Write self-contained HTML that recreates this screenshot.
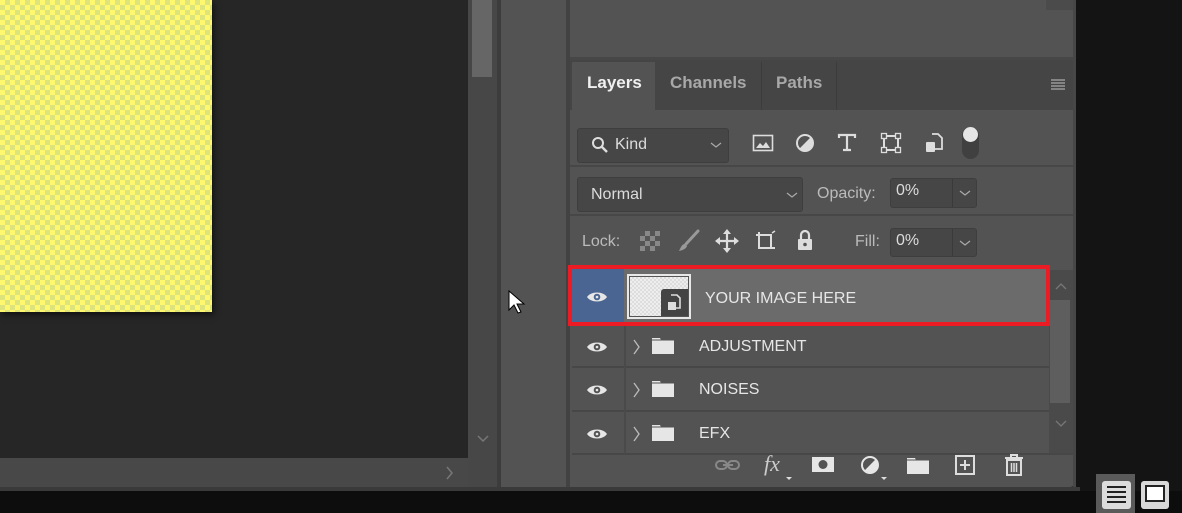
<!DOCTYPE html>
<html><head><meta charset="utf-8"><style>
*{margin:0;padding:0;box-sizing:border-box}
body{width:1182px;height:513px;overflow:hidden;background:#141414;position:relative;font-family:"Liberation Sans",sans-serif;color:#dcdcdc}
.a{position:absolute}
.chk{background-color:#fff86f;background-image:linear-gradient(45deg,#dde47c 25%,transparent 25%,transparent 75%,#dde47c 75%),linear-gradient(45deg,#dde47c 25%,transparent 25%,transparent 75%,#dde47c 75%);background-size:10px 10px;background-position:0 0,5px 5px}
.dd{background:#464646;border:1px solid #3e3e3e;border-radius:3px}
.t{font-size:16px;white-space:nowrap}
.ln{height:2px;background:#474747}
</style></head><body>
<!-- canvas -->
<div class="a" style="left:0;top:0;width:468px;height:458px;background:#262626"></div>
<div class="a chk" style="left:0;top:0;width:212px;height:312px;box-shadow:2px 3px 6px rgba(0,0,0,.5)"></div>
<!-- v scrollbar -->
<div class="a" style="left:468px;top:0;width:29px;height:487px;background:#474747"></div>
<div class="a" style="left:472px;top:0;width:20px;height:77px;background:#666"></div>
<svg class="a" style="left:476px;top:434px" width="14" height="10"><path d="M2 2l5 5 5-5" stroke="#777" stroke-width="1.5" fill="none"/></svg>
<!-- h scrollbar -->
<div class="a" style="left:0;top:458px;width:468px;height:29px;background:#484848"></div>
<svg class="a" style="left:445px;top:465px" width="10" height="16"><path d="M2 2l5 6-5 6" stroke="#777" stroke-width="1.5" fill="none"/></svg>
<div class="a" style="left:0;top:487px;width:1080px;height:4px;background:#3a3a3a"></div>
<div class="a" style="left:0;top:491px;width:1182px;height:22px;background:#0d0d0d"></div>
<!-- separator + middle panel -->
<div class="a" style="left:497px;top:0;width:4px;height:487px;background:#3c3c3c"></div>
<div class="a" style="left:501px;top:0;width:67px;height:487px;background:#535353"></div>
<div class="a" style="left:566px;top:0;width:4px;height:487px;background:#424242"></div>
<svg class="a" style="left:507px;top:289px" width="20" height="30"><path d="M2 2v19l5-5 4 8 3-1-4-8h7z" fill="#fff" stroke="#000" stroke-width="1"/></svg>
<!-- right panel -->
<div class="a" style="left:570px;top:0;width:506px;height:487px;background:#535353;border-bottom-right-radius:6px"></div>
<div class="a" style="left:1046px;top:0;width:28px;height:10px;background:#4b4b4b"></div>
<div class="a" style="left:570px;top:57px;width:506px;height:3px;background:#474747"></div>
<div class="a" style="left:1073px;top:0;width:3px;height:487px;background:#474747"></div>
<!-- tabs -->
<div class="a" style="left:570px;top:60px;width:503px;height:50px;background:#454545"></div>
<div class="a" style="left:572px;top:62px;width:83px;height:48px;background:#535353"></div>
<div class="a" style="left:761px;top:62px;width:1px;height:48px;background:#3c3c3c"></div>
<div class="a" style="left:836px;top:62px;width:1px;height:48px;background:#3c3c3c"></div>
<div class="a t" style="left:587px;top:73px;font-weight:bold;color:#f0f0f0;font-size:17px">Layers</div>
<div class="a t" style="left:670px;top:73px;font-weight:bold;color:#a8a8a8;font-size:17px">Channels</div>
<div class="a t" style="left:776px;top:73px;font-weight:bold;color:#a8a8a8;font-size:17px">Paths</div>
<svg class="a" style="left:1051px;top:79px" width="14" height="11"><path d="M0 1h14M0 4h14M0 7h14M0 10h14" stroke="#aaa" stroke-width="1.3"/></svg>
<!-- filter row -->
<div class="a dd" style="left:577px;top:128px;width:152px;height:35px"></div>
<svg class="a" style="left:591px;top:136px" width="18" height="18"><circle cx="7" cy="7" r="5" stroke="#ddd" stroke-width="2" fill="none"/><path d="M11 11l5 5" stroke="#ddd" stroke-width="2.4"/></svg>
<div class="a t" style="left:615px;top:136px">Kind</div>
<svg class="a" style="left:710px;top:141px" width="12" height="8"><path d="M1 2l5 4 5-4" stroke="#aaa" stroke-width="1.2" fill="none"/></svg>
<svg class="a" style="left:752px;top:133px" width="22" height="20"><rect x="1.5" y="2.5" width="19" height="15" stroke="#ddd" stroke-width="1.6" fill="none"/><path d="M4 15l4-5 3 3 3-4 4 6z" fill="#ddd"/></svg>
<svg class="a" style="left:795px;top:133px" width="20" height="20"><circle cx="10" cy="10" r="8" stroke="#ddd" stroke-width="2" fill="none"/><path d="M15.7 4.3A8 8 0 0 1 4.3 15.7z" fill="#ddd"/></svg>
<svg class="a" style="left:837px;top:132px" width="20" height="20"><path d="M2 6V3h16v3M10 3v15M6 18h8" stroke="#ddd" stroke-width="2.2" fill="none"/></svg>
<svg class="a" style="left:880px;top:132px" width="22" height="22"><rect x="4" y="4" width="14" height="14" stroke="#ddd" stroke-width="2" fill="none"/><g fill="#535353" stroke="#ddd" stroke-width="1.3"><rect x="1.5" y="1.5" width="5" height="5"/><rect x="15.5" y="1.5" width="5" height="5"/><rect x="1.5" y="15.5" width="5" height="5"/><rect x="15.5" y="15.5" width="5" height="5"/></g></svg>
<svg class="a" style="left:924px;top:132px" width="20" height="22"><path d="M8 2h6l4 4v11h-8" stroke="#ddd" stroke-width="1.8" fill="none"/><rect x="2" y="10" width="9" height="10" rx="1" fill="#ddd"/></svg>
<div class="a" style="left:962px;top:127px;width:17px;height:32px;border-radius:9px;background:#404040"></div>
<div class="a" style="left:963px;top:127px;width:15px;height:15px;border-radius:50%;background:#e6e6e6"></div>
<div class="a ln" style="left:570px;top:165px;width:503px"></div>
<!-- blend row -->
<div class="a dd" style="left:577px;top:177px;width:226px;height:35px"></div>
<div class="a t" style="left:591px;top:186px">Normal</div>
<svg class="a" style="left:786px;top:191px" width="12" height="8"><path d="M1 2l5 4 5-4" stroke="#aaa" stroke-width="1.2" fill="none"/></svg>
<div class="a t" style="left:817px;top:185px;color:#bbb">Opacity:</div>
<div class="a dd" style="left:890px;top:178px;width:87px;height:30px"></div>
<div class="a" style="left:952px;top:179px;width:1px;height:28px;background:#3a3a3a"></div>
<div class="a t" style="left:896px;top:182px">0%</div>
<svg class="a" style="left:959px;top:189px" width="12" height="8"><path d="M1 2l5 4 5-4" stroke="#aaa" stroke-width="1.2" fill="none"/></svg>
<div class="a ln" style="left:570px;top:214px;width:503px"></div>
<!-- lock row -->
<div class="a t" style="left:582px;top:233px;color:#bbb">Lock:</div>
<svg class="a" style="left:640px;top:231px" width="20" height="20"><rect x="0" y="0" width="20" height="20" fill="#888"/><g fill="#555"><rect x="0" y="0" width="5" height="5"/><rect x="10" y="0" width="5" height="5"/><rect x="5" y="5" width="5" height="5"/><rect x="15" y="5" width="5" height="5"/><rect x="0" y="10" width="5" height="5"/><rect x="10" y="10" width="5" height="5"/><rect x="5" y="15" width="5" height="5"/><rect x="15" y="15" width="5" height="5"/></g></svg>
<svg class="a" style="left:677px;top:229px" width="24" height="24"><path d="M21 2L9 15" stroke="#999" stroke-width="3" stroke-linecap="round"/><path d="M8 15c-3 0-4 3-6 7 4-1 7-2 8-5z" fill="#999"/></svg>
<svg class="a" style="left:715px;top:229px" width="24" height="24"><path d="M12 2v20M2 12h20" stroke="#ddd" stroke-width="2.2"/><path d="M12 0l4 5H8zM12 24l4-5H8zM0 12l5-4v8zM24 12l-5-4v8z" fill="#ddd"/></svg>
<svg class="a" style="left:753px;top:230px" width="24" height="22"><path d="M3 5h15v13M6 2v16h16" stroke="#ddd" stroke-width="2" fill="none"/><path d="M19 3l3-2" stroke="#ddd" stroke-width="1.5"/></svg>
<svg class="a" style="left:796px;top:229px" width="18" height="22"><path d="M5 10V6a4 4 0 0 1 8 0v4" stroke="#ddd" stroke-width="2.2" fill="none"/><rect x="2" y="10" width="14" height="11" rx="1" fill="#ddd"/><circle cx="9" cy="15.5" r="1.8" fill="#535353"/></svg>
<div class="a t" style="left:855px;top:233px;color:#bbb">Fill:</div>
<div class="a dd" style="left:890px;top:228px;width:87px;height:29px"></div>
<div class="a" style="left:952px;top:229px;width:1px;height:27px;background:#3a3a3a"></div>
<div class="a t" style="left:896px;top:232px">0%</div>
<svg class="a" style="left:959px;top:239px" width="12" height="8"><path d="M1 2l5 4 5-4" stroke="#aaa" stroke-width="1.2" fill="none"/></svg>
<!-- layer list scroll -->
<div class="a" style="left:1049px;top:270px;width:24px;height:185px;background:#4a4a4a"></div>
<div class="a" style="left:1050px;top:300px;width:20px;height:103px;background:#5e5e5e"></div>
<svg class="a" style="left:1054px;top:282px" width="14" height="9"><path d="M2 7l5-5 5 5" stroke="#777" stroke-width="1.3" fill="none"/></svg>
<svg class="a" style="left:1054px;top:419px" width="14" height="9"><path d="M2 2l5 5 5-5" stroke="#777" stroke-width="1.3" fill="none"/></svg>
<!-- selected row -->
<div class="a" style="left:572px;top:269px;width:52px;height:53px;background:#4b6592"></div>
<div class="a" style="left:624px;top:269px;width:423px;height:53px;background:#6b6b6b"></div>
<div class="a" style="left:568px;top:265px;width:482px;height:61px;border:4px solid #ed1c24"></div>
<div class="a" style="left:627px;top:274px;width:64px;height:45px;border:2px solid #e8e8e8;background:#555"></div>
<div class="a chk" style="left:630px;top:277px;width:58px;height:39px;background-color:#eee;background-image:linear-gradient(45deg,#ddd 25%,transparent 25%,transparent 75%,#ddd 75%),linear-gradient(45deg,#ddd 25%,transparent 25%,transparent 75%,#ddd 75%);background-size:4px 4px;background-position:0 0,2px 2px"></div>
<div class="a" style="left:661px;top:289px;width:27px;height:27px;background:#444;border-top-left-radius:3px"></div>
<svg class="a" style="left:664px;top:292px" width="22" height="22"><path d="M7 3h6l3 3v10h-6" stroke="#ddd" stroke-width="1.6" fill="none"/><rect x="4" y="10" width="8" height="8" fill="#ddd"/></svg>
<div class="a t" style="left:705px;top:290px;color:#e6e6e6">YOUR IMAGE HERE</div>
<!-- rows -->
<div class="a ln" style="left:572px;top:366px;width:477px"></div>
<div class="a ln" style="left:572px;top:410px;width:477px"></div>
<div class="a ln" style="left:572px;top:453px;width:501px"></div>
<div class="a" style="left:624px;top:326px;width:2px;height:128px;background:#4a4a4a"></div>
<svg width="0" height="0" style="position:absolute"><defs>
<g id="eye"><path d="M1 8C5 2 17 2 21 8C17 14 5 14 1 8z" fill="#e6e6e6"/><circle cx="11" cy="8" r="3.3" fill="#535353"/><circle cx="11" cy="8" r="1.3" fill="#e6e6e6"/></g>
<g id="fold"><path d="M1 3h8l1 2h13v14H1z" fill="#e6e6e6"/><path d="M1 5h22" stroke="#535353" stroke-width="1"/></g>
</defs></svg>
<svg class="a" style="left:586px;top:289px" width="22" height="16"><path d="M1 8C5 2 17 2 21 8C17 14 5 14 1 8z" fill="#e6e6e6"/><circle cx="11" cy="8" r="3.3" fill="#4b6592"/><circle cx="11" cy="8" r="1.3" fill="#e6e6e6"/></svg>
<svg class="a" style="left:586px;top:339px" width="22" height="16"><use href="#eye"/></svg>
<svg class="a" style="left:586px;top:382px" width="22" height="16"><use href="#eye"/></svg>
<svg class="a" style="left:586px;top:426px" width="22" height="16"><use href="#eye"/></svg>
<svg class="a" style="left:633px;top:338px" width="8" height="18"><path d="M1 2l5 7-5 7" stroke="#bbb" stroke-width="1.3" fill="none"/></svg>
<svg class="a" style="left:633px;top:381px" width="8" height="18"><path d="M1 2l5 7-5 7" stroke="#bbb" stroke-width="1.3" fill="none"/></svg>
<svg class="a" style="left:633px;top:425px" width="8" height="18"><path d="M1 2l5 7-5 7" stroke="#bbb" stroke-width="1.3" fill="none"/></svg>
<svg class="a" style="left:651px;top:335px" width="26" height="22"><use href="#fold"/></svg>
<svg class="a" style="left:651px;top:378px" width="26" height="22"><use href="#fold"/></svg>
<svg class="a" style="left:651px;top:422px" width="26" height="22"><use href="#fold"/></svg>
<div class="a t" style="left:699px;top:338px;color:#e6e6e6">ADJUSTMENT</div>
<div class="a t" style="left:699px;top:381px;color:#e6e6e6">NOISES</div>
<div class="a t" style="left:699px;top:425px;color:#e6e6e6">EFX</div>
<!-- bottom toolbar -->
<svg class="a" style="left:714px;top:457px" width="28" height="16"><rect x="2" y="4" width="11" height="8" rx="4" stroke="#888" stroke-width="2" fill="none"/><rect x="14" y="4" width="11" height="8" rx="4" stroke="#888" stroke-width="2" fill="none"/><path d="M9 8h10" stroke="#888" stroke-width="2"/></svg>
<div class="a" style="left:764px;top:451px;font-size:22px;font-style:italic;color:#ccc;font-family:'Liberation Serif',serif">fx</div>
<div class="a" style="left:786px;top:477px;width:0;height:0;border-left:3px solid transparent;border-right:3px solid transparent;border-top:3px solid #ddd"></div>
<svg class="a" style="left:811px;top:456px" width="24" height="18"><rect x="1" y="1" width="22" height="15" fill="#e6e6e6"/><circle cx="12" cy="8.5" r="4.5" fill="#535353"/></svg>
<svg class="a" style="left:860px;top:455px" width="20" height="20"><circle cx="10" cy="10" r="8" stroke="#e6e6e6" stroke-width="2" fill="none"/><path d="M15.7 4.3A8 8 0 0 1 4.3 15.7z" fill="#e6e6e6"/></svg>
<div class="a" style="left:881px;top:477px;width:0;height:0;border-left:3px solid transparent;border-right:3px solid transparent;border-top:3px solid #ddd"></div>
<svg class="a" style="left:906px;top:455px" width="26" height="22"><use href="#fold"/></svg>
<svg class="a" style="left:954px;top:454px" width="22" height="22"><rect x="2" y="2" width="18" height="18" stroke="#ddd" stroke-width="2" fill="none"/><path d="M11 6v10M6 11h10" stroke="#ddd" stroke-width="2"/></svg>
<svg class="a" style="left:1003px;top:453px" width="22" height="24"><path d="M2 5h18M8 5V2h6v3" stroke="#ddd" stroke-width="2" fill="none"/><path d="M4 7h14v15H4z" stroke="#ddd" stroke-width="2" fill="none"/><path d="M8.5 10v9M11 10v9M13.5 10v9" stroke="#ddd" stroke-width="1.5"/></svg>
<!-- bottom right buttons -->
<div class="a" style="left:1096px;top:474px;width:39px;height:39px;background:#5a5a5a"></div>
<div class="a" style="left:1102px;top:481px;width:29px;height:28px;background:#dcdcdc;border-radius:3px"></div>
<svg class="a" style="left:1106px;top:485px" width="21" height="20"><path d="M1 2h19M1 7h19M1 12h19M1 17h19" stroke="#222" stroke-width="2"/></svg>
<div class="a" style="left:1141px;top:481px;width:28px;height:28px;background:#d8d8d8;border-radius:3px"></div>
<div class="a" style="left:1145px;top:485px;width:20px;height:17px;background:#fff;border:2px solid #222"></div>
</body></html>
